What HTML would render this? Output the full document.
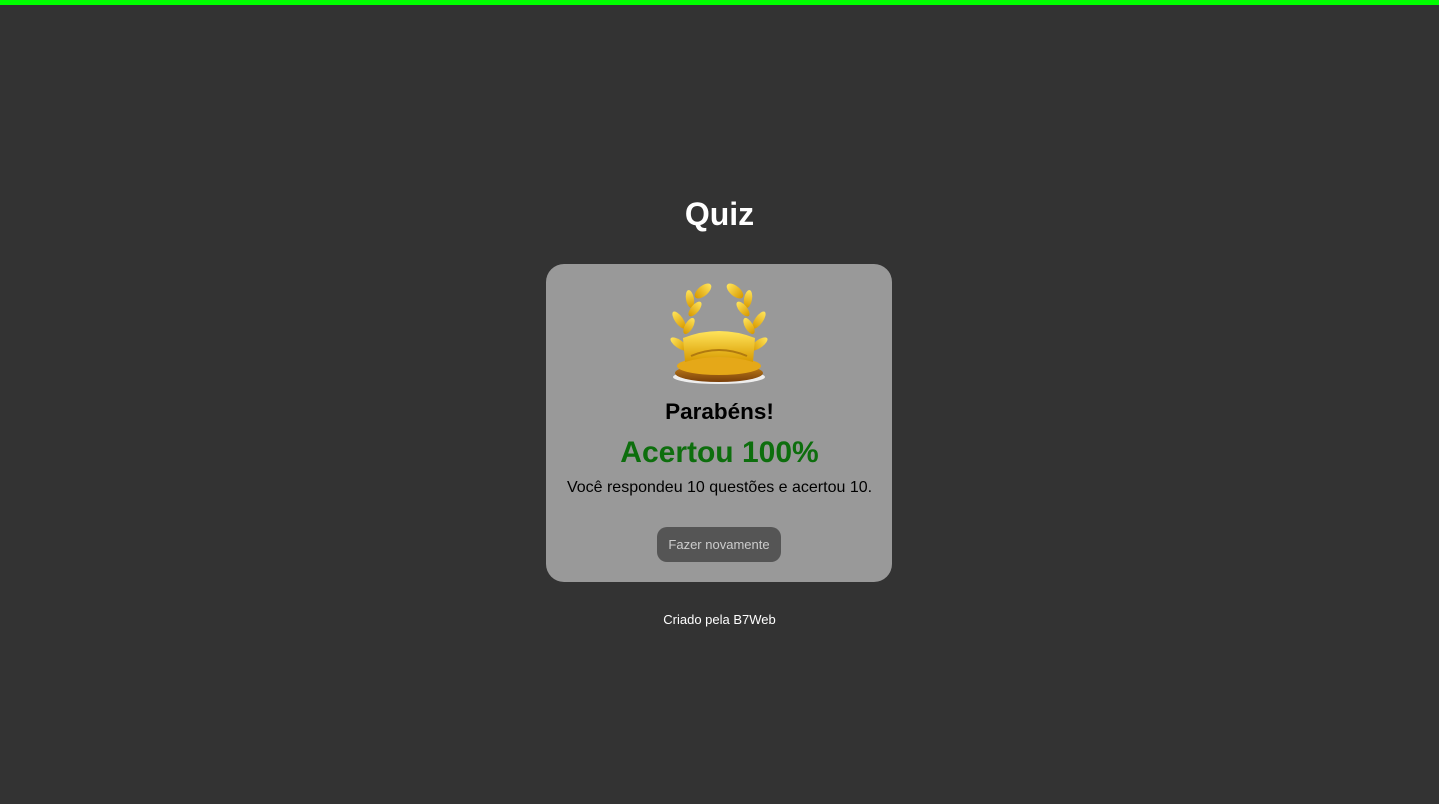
<!DOCTYPE html>
<html><head><meta charset="utf-8"><style>
body{margin:0;width:1439px;height:804px;background:#333;font-family:"Liberation Sans",Arial,sans-serif;position:relative;overflow:hidden}
.bar{position:absolute;left:0;top:0;width:1439px;height:5px;background:#00ff00}
.t{position:absolute;left:0;width:1439px;text-align:center;white-space:nowrap}
.card{position:absolute;left:546px;top:264px;width:346px;height:318px;background:#999;border-radius:18px}
.btn{position:absolute;left:657px;top:527px;width:124px;height:35px;background:#555;border-radius:10px;color:#ccc;font-size:13px;line-height:35px;text-align:center}
</style></head><body>
<div class="bar"></div>
<div class="t" style="top:196px;font-size:32px;font-weight:bold;color:#fff">Quiz</div>
<div class="card"></div>
<svg style="position:absolute;left:665px;top:282px" width="108" height="104" viewBox="0 0 108 104">
<defs><linearGradient id="g" x1="0" y1="0" x2="0" y2="1"><stop offset="0" stop-color="#ffe45a"/><stop offset="1" stop-color="#d89a00"/></linearGradient>
<linearGradient id="b" x1="0" y1="0" x2="0" y2="1"><stop offset="0" stop-color="#c8861a"/><stop offset="1" stop-color="#7a3f0a"/></linearGradient></defs>
<g fill="url(#g)">
<ellipse cx="38" cy="9" rx="5" ry="10" transform="rotate(50 38 9)"/>
<ellipse cx="25" cy="17" rx="4" ry="9" transform="rotate(-10 25 17)"/>
<ellipse cx="30" cy="27" rx="4" ry="9" transform="rotate(40 30 27)"/>
<ellipse cx="14" cy="38" rx="4" ry="10" transform="rotate(-35 14 38)"/>
<ellipse cx="24" cy="44" rx="4" ry="9" transform="rotate(30 24 44)"/>
<ellipse cx="14" cy="62" rx="4" ry="10" transform="rotate(-55 14 62)"/>
<ellipse cx="70" cy="9" rx="5" ry="10" transform="rotate(-50 70 9)"/>
<ellipse cx="83" cy="17" rx="4" ry="9" transform="rotate(10 83 17)"/>
<ellipse cx="78" cy="27" rx="4" ry="9" transform="rotate(-40 78 27)"/>
<ellipse cx="94" cy="38" rx="4" ry="10" transform="rotate(35 94 38)"/>
<ellipse cx="84" cy="44" rx="4" ry="9" transform="rotate(-30 84 44)"/>
<ellipse cx="94" cy="62" rx="4" ry="10" transform="rotate(55 94 62)"/>
</g>
<ellipse cx="54" cy="95" rx="46" ry="7" fill="#eee"/>
<ellipse cx="54" cy="91" rx="44" ry="9" fill="url(#b)"/>
<ellipse cx="54" cy="84" rx="42" ry="9" fill="#e5a818"/>
<path d="M18 56 Q54 42 90 56 L88 80 Q54 70 20 80 Z" fill="url(#g)"/>
<path d="M26 74 Q54 62 82 74" stroke="#b07a10" stroke-width="2" fill="none"/>
</svg>
<div class="t" style="top:399px;font-size:22.5px;font-weight:bold;color:#000">Parabéns!</div>
<div class="t" style="top:436px;font-size:30px;font-weight:bold;color:#0d6e0d">Acertou 100%</div>
<div class="t" style="top:479px;font-size:16px;color:#000">Você respondeu 10 questões e acertou 10.</div>
<div class="btn">Fazer novamente</div>
<div class="t" style="top:612px;font-size:13px;color:#fff">Criado pela B7Web</div>
</body></html>
